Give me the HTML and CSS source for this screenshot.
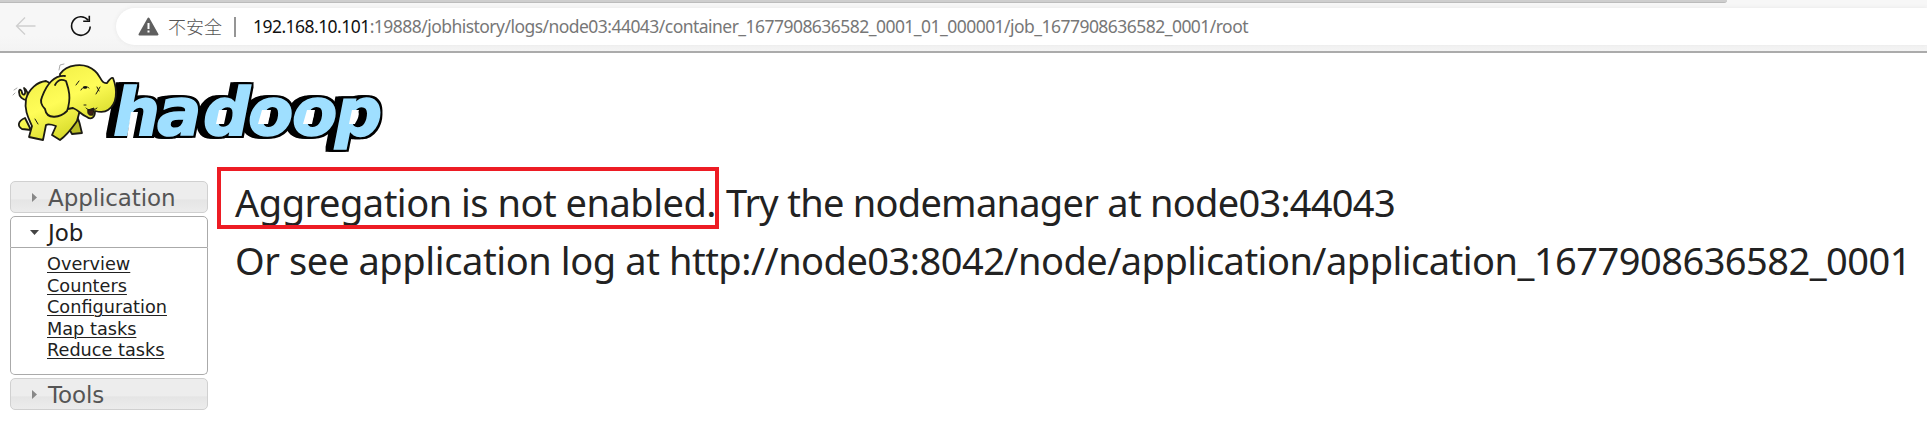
FILE: index.html
```html
<!DOCTYPE html>
<html lang="zh-CN">
<head>
<meta charset="utf-8">
<title>Job History Logs</title>
<link rel="stylesheet" href="styles.css">
</head>
<body>
<header class="browser">
  <div class="tab-strip"></div>
  <svg class="back" width="22" height="20" viewBox="0 0 22 20"><path d="M20.500 10H1.500M10 1.500 1.500 10 10 18.500"/></svg>
  <svg class="reload" width="22" height="22" viewBox="0 0 22 22"><path d="M20.200 11.500A9.300 9.300 0 1 1 18 5M19.300.800V6.300H13.200"/></svg>
  <div class="address">
    <svg class="warn" width="21" height="19" viewBox="0 0 21 19"><path d="M10.500 1.500 19.500 17.500H1.500Z" fill="#5f5f5f" stroke="#5f5f5f" stroke-width="2" stroke-linejoin="round"/><path d="M10.500 6V12M10.500 13.500V15.500" stroke="#fff" stroke-width="2"/></svg>
    <span class="insecure">不安全</span>
    <span class="divider"></span>
    <span class="url"><b>192.168.10.101</b>:19888/jobhistory/logs/node03:44043/container_1677908636582_0001_01_000001/job_1677908636582_0001/root</span>
  </div>
</header>
<svg class="logo" width="390" height="100" viewBox="0 54 390 100">
  <defs>
    <linearGradient id="skin" gradientUnits="userSpaceOnUse" x1="40" y1="64" x2="75" y2="140"><stop offset="0" stop-color="#efec45"/><stop offset=".5" stop-color="#fffd58"/><stop offset="1" stop-color="#d0d422"/></linearGradient>
    <filter id="block" filterUnits="userSpaceOnUse" x="90" y="70" width="300" height="84" color-interpolation-filters="sRGB">
      <feMorphology in="SourceAlpha" operator="dilate" radius="2.200" result="edge"/>
      <feOffset in="edge" dx="-3" dy="0" result="mid"/>
      <feOffset in="edge" dx="-6" dy="0" result="far"/>
      <feMerge><feMergeNode in="far"/><feMergeNode in="mid"/><feMergeNode in="edge"/><feMergeNode in="SourceGraphic"/></feMerge>
    </filter>
  </defs>
  <text class="word" x="113 157 203 248 292 335" y="135" filter="url(#block)">hadoop</text>
  <path class="hole" d="M131 112H138L133 138H127ZM219 110H227L224 124H216ZM262 110H271L268 124H258ZM307 110H315L312 124H303ZM352 110H359L355 124H349Z"/>
  <g class="elephant">
    <path d="M27 100C23 100 19 97 19 92C19 88 22 90 22 93C23 96 27 95 24 88C29 91 28 96 27 100Z"/>
    <path d="M25 118C18 121 17 126 22 129L31 130Z"/>
    <path d="M76 116C80 120 80 127 82 133L72 134 68 127Z" fill="#b9bd25"/>
    <path d="M46 81C37 82 29 89 26 99C24 111 29 119 32 126L29 137 43 140 46 125C48 124 53 125 56 126L52 135 60 140C68 134 72 128 77 121L80 110 59 88Z"/>
    <path d="M60 74C66 65 84 61 95 71C101 76 101 84 107 83C109 80 111 77 113 78C118 91 117 104 108 110C104 113 99 112 95 111C95 118 91 120 87 117C80 114 80 111 73 108L62 110Z"/>
    <path d="M65 76C51 75 45 89 42 97C39 103 43 107 45 109C47 121 61 117 67 111C72 97 68 87 66 81C60 78 57 81 55 85"/>
    <path d="M88 110 94 108 93 115C89 116 87 114 88 110Z" fill="#3c2116" stroke-width="1"/>
    <path d="M86 108C88 111 94 111 97 108M81 90C83 86 87 86 89 88M76 85 79 81M100 87 96 94M97 87 99 91M84 105H86M35 119 38 124" fill="none" stroke-width="1"/>
    <ellipse cx="85" cy="87.500" rx="2.200" ry="1.300" fill="#111" stroke="none"/>
    <path d="M59 70 60 65 64 64M14 90 17 88M13 95 15 93" fill="none" stroke="#aaa" stroke-width="1"/>
  </g>
</svg>
<div class="columns">
  <nav class="side">
    <div class="bar"><i class="right"></i>Application</div>
    <div class="bar open"><i class="down"></i>Job</div>
    <div class="panel">
      <a>Overview</a><a>Counters</a><a>Configuration</a><a>Map tasks</a><a>Reduce tasks</a>
    </div>
    <div class="bar"><i class="right"></i>Tools</div>
  </nav>
  <main class="content">
    <div class="highlight"></div>
    <p class="first"><span class="notice">Aggregation is not enabled.</span> <span class="try">Try the nodemanager at node03:44043</span></p>
    <p class="second"><span>Or see application log at </span><span>http://node03:8042/node/application/application_1677908636582_0001</span></p>
  </main>
</div>
<script src="fit.js"></script>
</body>
</html>
```
FILE: styles.css
```css
* { box-sizing: border-box; }
body { margin: 0; background: #fff; height: 430px; overflow: hidden; }
.browser { position: relative; height: 53px; display: flex; align-items: flex-start; background: linear-gradient(#f7f7f7 0 70%, #f3f3f3); border-bottom: 2px solid #ababab; }
.tab-strip { position: absolute; left: 0; top: 0; width: 1727px; height: 3px; background: #cecece; border-bottom: 1px solid #bbb; border-radius: 0 0 4px 0; }
.back { margin: 16px 0 0 15px; fill: none; stroke: #cfcfcf; stroke-width: 1.3; }
.reload { margin: 15px 0 0 33px; fill: none; stroke: #111; stroke-width: 1.6; }
.address { flex: 1; height: 37px; margin: 8px 0 0 24px; padding-left: 22px; display: flex; align-items: center; background: #fff; border-radius: 19px 0 0 19px; box-shadow: 0 0 4px #e6e6e6; }
.warn { flex: none; }
.insecure { margin-left: 9px; padding-bottom: 2px; font: 300 18px/24px "Noto Sans CJK SC", sans-serif; color: #555; width: 54px; white-space: nowrap; }
.divider { width: 2px; height: 20px; margin-left: 12px; background: #959595; }
.url { margin-left: 17px; padding-bottom: 2px; font: 17.5px/24px "Noto Sans", sans-serif; color: #777; white-space: nowrap; }
.url b { font-weight: 400; color: #111; }
.logo { display: block; margin-top: 1px; }
.word { font: italic bold 66px "DejaVu Sans", sans-serif; fill: #9fdfff; stroke: #9fdfff; stroke-width: 1.5px; }
.hole { fill: #fff; }
.elephant { fill: url(#skin); stroke: #1c1b14; stroke-width: 1.8; stroke-linejoin: round; stroke-linecap: round; }
.columns { display: flex; margin-top: 27px; }
.side { width: 198px; margin-left: 10px; font-family: "DejaVu Sans", Verdana, sans-serif; }
.bar { height: 32px; display: flex; align-items: center; border: 1px solid #d0d0d0; border-radius: 5px; padding-left: 20px; font-size: 23px; letter-spacing: -.1px; line-height: 32px; padding-top: 1px; color: #555; background: linear-gradient(#ededed 0 55%, #e5e5e5 60%, #ececec); }
.bar.open { margin-top: 3px; color: #212121; background: #fff; border-color: #aaa; border-radius: 5px 5px 0 0; }
.bar i { flex: none; }
.bar .right { width: 5px; height: 9px; margin: 0 11px 0 1px; background: #888; clip-path: polygon(0 0, 100% 50%, 0 100%); }
.bar .down { width: 9px; height: 5px; margin: 0 9px 0 -1px; background: #444; clip-path: polygon(0 0, 100% 0, 50% 100%); }
.panel { height: 127px; margin-bottom: 3px; padding: 6px 0 0 36px; display: flex; flex-direction: column; align-items: flex-start; border: 1px solid #aaa; border-top: 0; border-radius: 0 0 5px 5px; }
.panel a { font-size: 17.700px; line-height: 21.500px; color: #212121; text-decoration: underline; text-underline-offset: 2px; text-decoration-thickness: 1px; white-space: nowrap; }
.content { position: relative; margin-left: 27px; font: 38px/58px "Noto Sans", "Open Sans", sans-serif; color: #222; white-space: nowrap; }
.content p { margin: 0; }
.content .first { margin-top: -8px; }
.highlight { position: absolute; left: -18px; top: -14px; width: 502px; height: 62px; border: 4px solid #ed1c24; }
```
FILE: fit.js
```js
function fit(el, width) {
  const n = el.textContent.length;
  const now = el.getBoundingClientRect().width;
  el.style.letterSpacing = ((width - now) / n) + 'px';
}
fit(document.querySelector('.url'), 995);
fit(document.querySelector('.notice'), 481);
fit(document.querySelector('.try'), 669);
const runs = document.querySelectorAll('.second span');
fit(runs[0], 434);
fit(runs[1], 1242);
```
